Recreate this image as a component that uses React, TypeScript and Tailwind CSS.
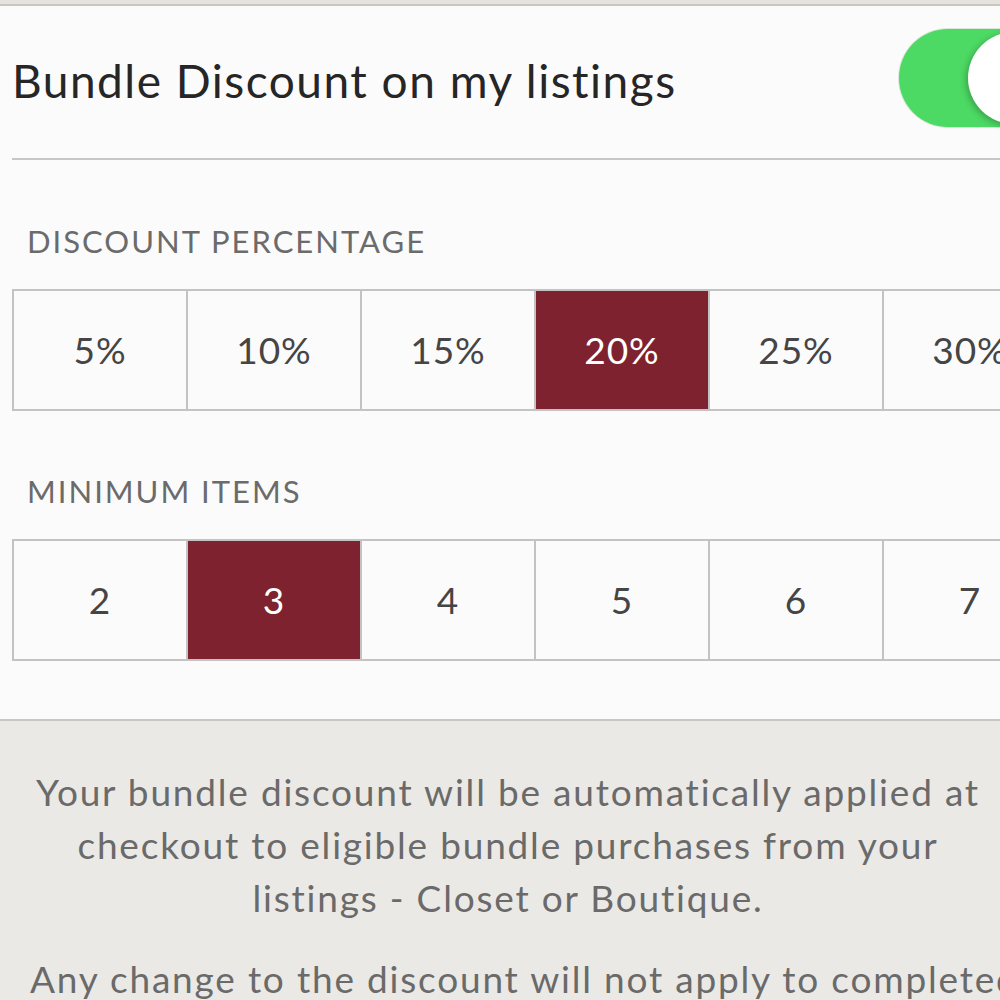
const percents = ["5%", "10%", "15%", "20%", "25%", "30%", "35%"]
const minItems = ["2", "3", "4", "5", "6", "7", "8"]

type OptionRowProps = {
  options: string[]
  selected: string
}

const OptionRow = ({ options, selected }: OptionRowProps) => {
  return (
    <div className="flex border-y-2 border-[#c4c2c2] w-max">
      {options.map((opt) => (
        <div
          key={opt}
          className={`w-[174px] h-[118px] flex items-center justify-center border-l-2 border-[#c4c2c2] text-[37px] tracking-[1px] ${
            opt === selected ? "bg-[#7e2230] text-white" : "text-[#454545]"
          }`}
        >
          {opt}
        </div>
      ))}
    </div>
  )
}

export default function App() {
  return (
    <div
      className="w-[1000px] h-[1000px] overflow-hidden bg-[#ebe9e5]"
      style={{ fontFamily: "Lato, 'Open Sans', sans-serif" }}
    >
      <div className="w-[1075px]">
        <div className="h-[4px] bg-[#e6e3de] border-b-2 border-[#c9c6c1] box-content" />

        <div className="bg-[#fcfbfb] pl-[12px] border-b-2 border-[#c9c7c5]">
          <div className="h-[154px] flex items-center justify-between pr-[12px] border-b-2 border-[#c7c6c6]">
            <span className="text-[46px] text-[#262626] tracking-[1.5px] -mt-[4px]">
              Bundle Discount on my listings
            </span>
            <div className="relative w-[164px] h-[98px] rounded-full bg-[#4cd964] shadow-[0_0_0_1px_#d8e8da] -mt-[8px]">
              <div className="absolute right-[3px] top-[3px] w-[92px] h-[92px] rounded-full bg-white shadow-[-2px_2px_6px_rgba(0,0,0,0.25)]" />
            </div>
          </div>

          <div className="pt-[65px] pb-[58px]">
            <div className="text-[31px] text-[#6b6b6b] tracking-[2px] pl-[15px] h-[32px] leading-[32px]">
              DISCOUNT PERCENTAGE
            </div>
            <div className="mt-[32px]">
              <OptionRow options={percents} selected="20%" />
            </div>

            <div className="mt-[64px] text-[31px] text-[#6b6b6b] tracking-[2px] pl-[15px] h-[32px] leading-[32px]">
              MINIMUM ITEMS
            </div>
            <div className="mt-[32px]">
              <OptionRow options={minItems} selected="3" />
            </div>
          </div>
        </div>

        <div className="w-[1016px] text-center text-[37px] leading-[53px] tracking-[1.8px] text-[#6a6a6a] pt-[44px]">
          <p className="whitespace-nowrap">
            Your bundle discount will be automatically applied at
            <br />
            checkout to eligible bundle purchases from your
            <br />
            listings - Closet or Boutique.
          </p>
          <p className="mt-[28px] whitespace-nowrap text-left pl-[30px]">
            Any change to the discount will not apply to completed
          </p>
        </div>
      </div>
    </div>
  )
}
